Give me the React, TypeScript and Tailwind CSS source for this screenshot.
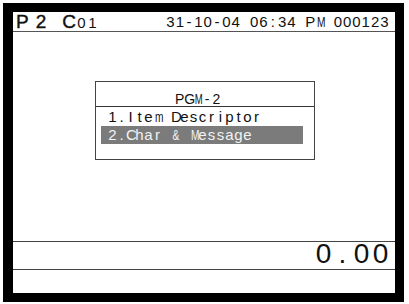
const font = { fontFamily: '"Liberation Sans", Arial, sans-serif' };

const wide = "MmW&";

// LCD style text: every character sits in a fixed width cell
function Cells({ text, cell }: { text: string; cell: string }) {
  return (
    <>
      {text.split("").map((c, i) => (
        <span key={i} className={`inline-block text-center ${cell}`}>
          {wide.includes(c) ? (
            <span className="inline-block scale-x-[0.68]">{c}</span>
          ) : c === " " ? (
            "\u00a0"
          ) : (
            c
          )}
        </span>
      ))}
    </>
  );
}

export default function App() {
  return (
    <div
      className="w-[409px] h-[304px] bg-white pt-[3px] pl-[3px] pr-[5px] pb-[2px] text-[#111]"
      style={font}
    >
      <div className="h-full border-black border-t-[9px] border-b-[9px] border-l-[10px] border-r-[9px] flex flex-col bg-white">
        {/* header */}
        <div className="h-[19px] flex items-center justify-between pl-[3px] pr-[6px] whitespace-nowrap">
          <div className="flex items-baseline leading-[19px] [-webkit-text-stroke:0.4px_#111]">
            <span className="text-[19px]">P</span>
            <span className="text-[19px] ml-[7px]">2</span>
            <span className="text-[19px] ml-[16px]">C</span>
            <span className="text-[15px] [-webkit-text-stroke:0px]">
              <Cells text="01" cell="w-[11px]" />
            </span>
          </div>
          <div className="text-[15px] leading-[19px]">
            <Cells text="31-10-04 06:34 PM 000123" cell="w-[9.3px]" />
          </div>
        </div>
        <div className="h-px bg-[#555]" />

        {/* body */}
        <div className="h-[209px]">
          <div className="ml-[82px] mt-[49px] w-[220px] border border-[#444]">
            <div className="h-[24px] flex items-end justify-center text-[14px] leading-[14px] pr-[14px]">
              <Cells text="PGM-2" cell="w-[9.2px]" />
            </div>
            <div className="h-px bg-[#333]" />
            <div className="mt-[1px] text-[15px] leading-[18px] whitespace-nowrap">
              <div className="ml-[5px] mr-[11px] pl-[7px] h-[18px]">
                <Cells text="1.Item Descriptor" cell="w-[9px]" />
              </div>
              <div className="ml-[5px] mr-[11px] pl-[7px] h-[18px] bg-[#7b7b7b] text-[#f2f2f2]">
                <Cells text="2.Char & Message" cell="w-[9px]" />
              </div>
            </div>
            <div className="h-[15px]" />
          </div>
        </div>
        <div className="h-px bg-[#444]" />

        {/* amount */}
        <div className="h-[27px] flex justify-end items-start pr-[5px] text-[28px] leading-[24px]">
          <Cells text="0.00" cell="w-[19px]" />
        </div>
        <div className="h-px bg-[#444]" />
        <div className="h-[23px]" />
      </div>
    </div>
  );
}
